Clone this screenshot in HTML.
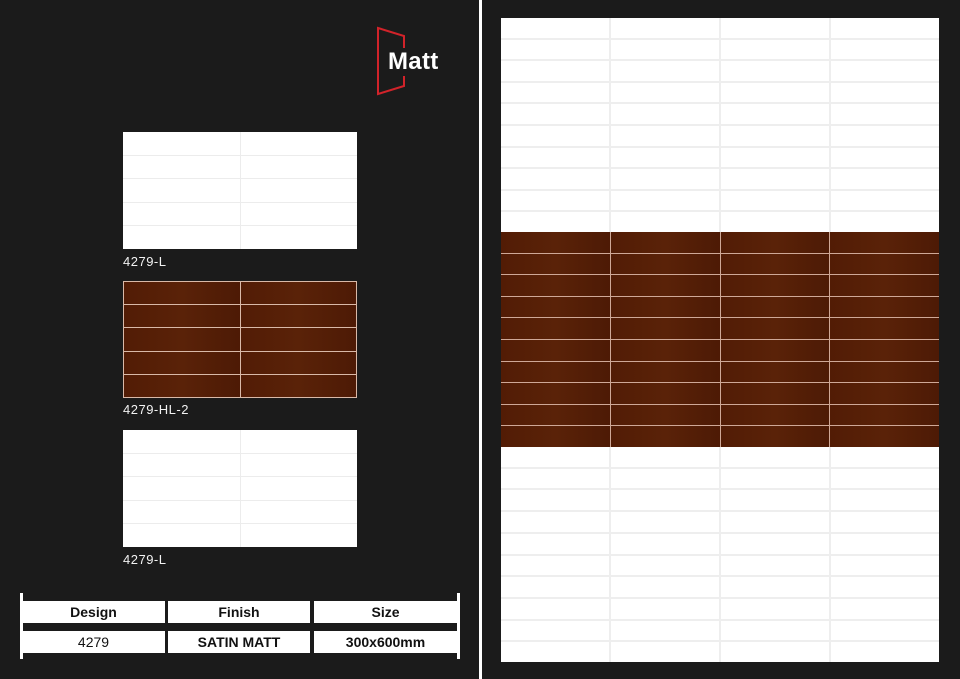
<!DOCTYPE html>
<html><head><meta charset="utf-8"><style>
*{margin:0;padding:0;box-sizing:border-box}
body{width:960px;height:679px;background:#1b1b1b;position:relative;overflow:hidden;font-family:"Liberation Sans",sans-serif}
.abs{position:absolute}
.grid{display:grid;gap:1px}
.w{background:#fff}
.tb{background:linear-gradient(90deg,#521c05,#5a2208 50%,#4d1a05)}
.lbl{color:#f2f2f2;font-size:13px;letter-spacing:.5px}
.cell{position:absolute;background:#fff;color:#111;font-size:14px;text-align:center;line-height:22px}
</style></head><body>
<div class="abs" style="left:479px;top:0;width:3px;height:679px;background:#fff"></div>

<svg class="abs" style="left:370px;top:22px" width="50" height="80"><path d="M8 6 L34 14 L34 64 L8 72 Z" fill="none" stroke="#d2232a" stroke-width="2"/></svg>
<div class="abs" style="left:387px;top:48px;color:#fff;font-weight:bold;font-size:24px;letter-spacing:.3px;background:#1b1b1b;padding-left:1px;line-height:28px">Matt</div>

<div class="abs grid" style="left:123px;top:132px;width:234px;height:117px;grid-template-columns:1fr 1fr;grid-template-rows:repeat(5,1fr);background:#ececec">
<div class="w"></div><div class="w"></div><div class="w"></div><div class="w"></div><div class="w"></div><div class="w"></div><div class="w"></div><div class="w"></div><div class="w"></div><div class="w"></div></div>
<div class="abs lbl" style="left:123px;top:254px">4279-L</div>
<div class="abs grid" style="left:123px;top:281px;width:234px;height:117px;grid-template-columns:1fr 1fr;grid-template-rows:repeat(5,1fr);background:#d9b9a8;padding:1px">
<div class="tb"></div><div class="tb"></div><div class="tb"></div><div class="tb"></div><div class="tb"></div><div class="tb"></div><div class="tb"></div><div class="tb"></div><div class="tb"></div><div class="tb"></div></div>
<div class="abs lbl" style="left:123px;top:402px">4279-HL-2</div>
<div class="abs grid" style="left:123px;top:430px;width:234px;height:117px;grid-template-columns:1fr 1fr;grid-template-rows:repeat(5,1fr);background:#ececec">
<div class="w"></div><div class="w"></div><div class="w"></div><div class="w"></div><div class="w"></div><div class="w"></div><div class="w"></div><div class="w"></div><div class="w"></div><div class="w"></div></div>
<div class="abs lbl" style="left:123px;top:552px">4279-L</div>

<div class="abs" style="left:20px;top:593px;width:3px;height:66px;background:#fff"></div>
<div class="abs" style="left:457px;top:593px;width:3px;height:66px;background:#fff"></div>
<div class="cell" style="left:22px;top:601px;width:143px;font-weight:bold">Design</div>
<div class="cell" style="left:168px;top:601px;width:142px;font-weight:bold">Finish</div>
<div class="cell" style="left:314px;top:601px;width:143px;font-weight:bold">Size</div>
<div class="cell" style="left:22px;top:631px;width:143px">4279</div>
<div class="cell" style="left:168px;top:631px;width:142px;font-weight:bold">SATIN MATT</div>
<div class="cell" style="left:314px;top:631px;width:143px;font-weight:bold">300x600mm</div>

<div class="abs" style="left:501px;top:18px;width:438px;height:644px;background:#fff">
<div class="grid" style="height:214px;grid-template-columns:repeat(4,1fr);grid-template-rows:repeat(10,1fr);background:#eeeeee;gap:2px">
<div class="w"></div><div class="w"></div><div class="w"></div><div class="w"></div><div class="w"></div><div class="w"></div><div class="w"></div><div class="w"></div><div class="w"></div><div class="w"></div><div class="w"></div><div class="w"></div><div class="w"></div><div class="w"></div><div class="w"></div><div class="w"></div><div class="w"></div><div class="w"></div><div class="w"></div><div class="w"></div><div class="w"></div><div class="w"></div><div class="w"></div><div class="w"></div><div class="w"></div><div class="w"></div><div class="w"></div><div class="w"></div><div class="w"></div><div class="w"></div><div class="w"></div><div class="w"></div><div class="w"></div><div class="w"></div><div class="w"></div><div class="w"></div><div class="w"></div><div class="w"></div><div class="w"></div><div class="w"></div></div>
<div class="grid" style="height:215px;grid-template-columns:repeat(4,1fr);grid-template-rows:repeat(10,1fr);background:#cfa897">
<div class="tb"></div><div class="tb"></div><div class="tb"></div><div class="tb"></div><div class="tb"></div><div class="tb"></div><div class="tb"></div><div class="tb"></div><div class="tb"></div><div class="tb"></div><div class="tb"></div><div class="tb"></div><div class="tb"></div><div class="tb"></div><div class="tb"></div><div class="tb"></div><div class="tb"></div><div class="tb"></div><div class="tb"></div><div class="tb"></div><div class="tb"></div><div class="tb"></div><div class="tb"></div><div class="tb"></div><div class="tb"></div><div class="tb"></div><div class="tb"></div><div class="tb"></div><div class="tb"></div><div class="tb"></div><div class="tb"></div><div class="tb"></div><div class="tb"></div><div class="tb"></div><div class="tb"></div><div class="tb"></div><div class="tb"></div><div class="tb"></div><div class="tb"></div><div class="tb"></div></div>
<div class="grid" style="height:215px;grid-template-columns:repeat(4,1fr);grid-template-rows:repeat(10,1fr);background:#eeeeee;gap:2px">
<div class="w"></div><div class="w"></div><div class="w"></div><div class="w"></div><div class="w"></div><div class="w"></div><div class="w"></div><div class="w"></div><div class="w"></div><div class="w"></div><div class="w"></div><div class="w"></div><div class="w"></div><div class="w"></div><div class="w"></div><div class="w"></div><div class="w"></div><div class="w"></div><div class="w"></div><div class="w"></div><div class="w"></div><div class="w"></div><div class="w"></div><div class="w"></div><div class="w"></div><div class="w"></div><div class="w"></div><div class="w"></div><div class="w"></div><div class="w"></div><div class="w"></div><div class="w"></div><div class="w"></div><div class="w"></div><div class="w"></div><div class="w"></div><div class="w"></div><div class="w"></div><div class="w"></div><div class="w"></div></div>
</div>
</body></html>
